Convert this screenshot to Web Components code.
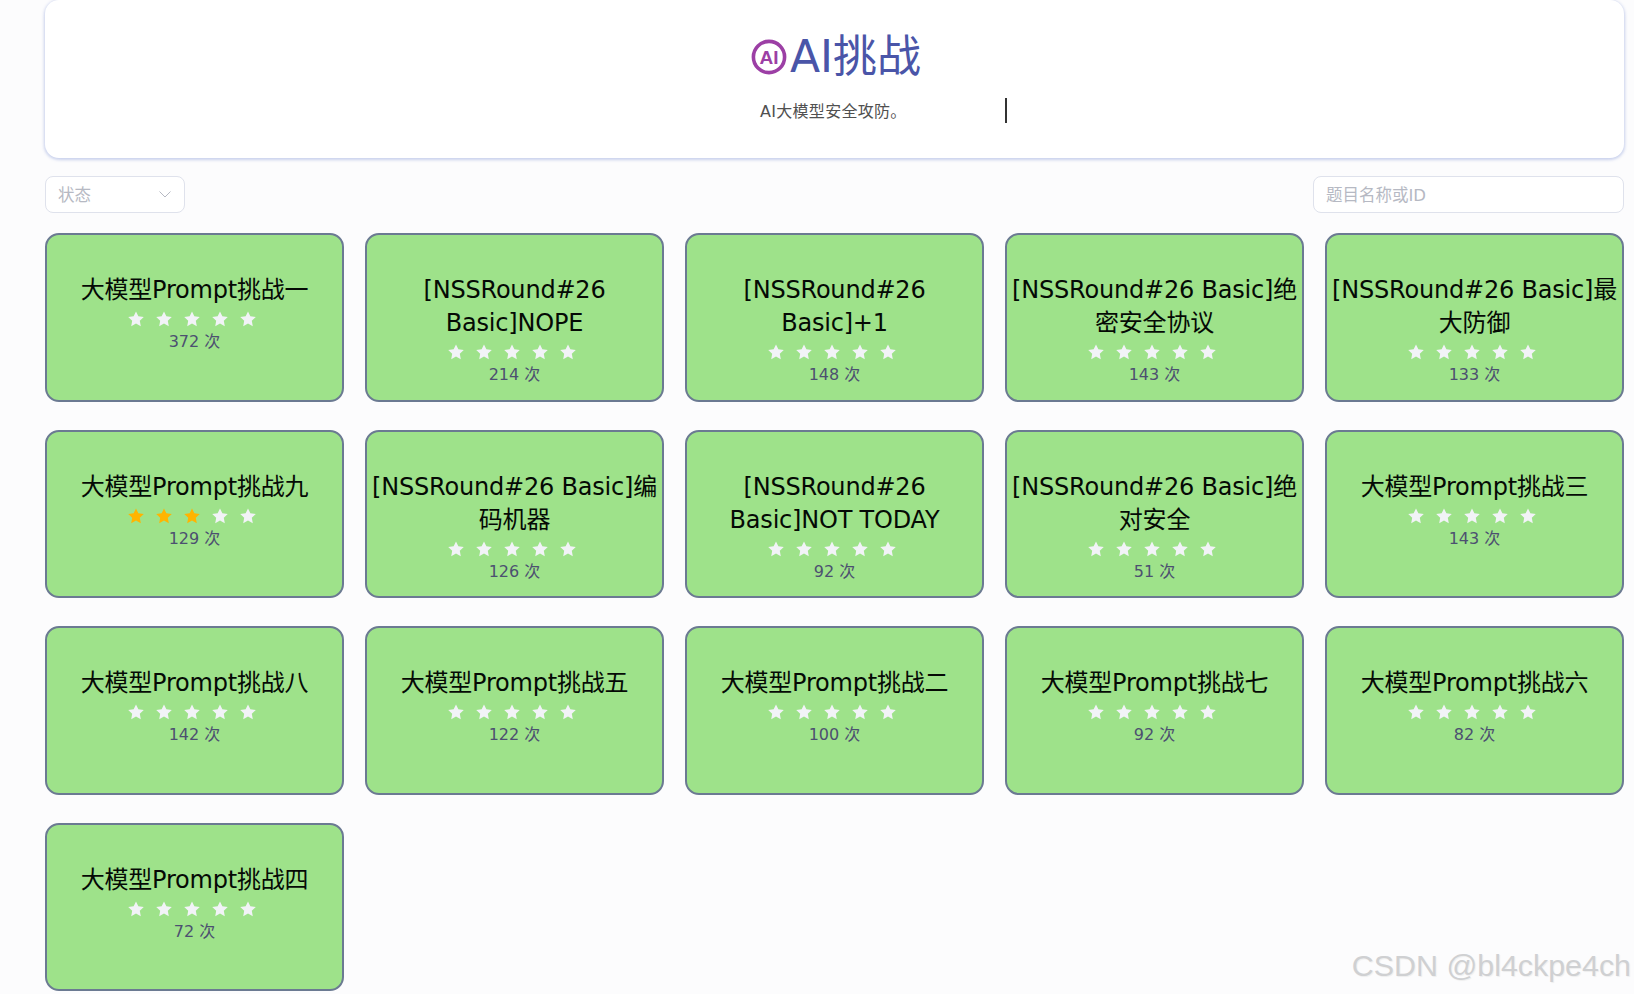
<!DOCTYPE html>
<html lang="zh">
<head>
<meta charset="utf-8">
<title>AI挑战</title>
<style>
  html, body { margin: 0; height: 100%; overflow: hidden; }
  body { background: #fcfcfd; font-family: "DejaVu Sans", "Noto Sans CJK SC", sans-serif; }
</style>
</head>
<body>
<challenge-page></challenge-page>
<script>
const FONT = `"DejaVu Sans", "Noto Sans CJK SC", sans-serif`;

class PageHeader extends HTMLElement {
    constructor() {
        super();
        this.root = this.attachShadow({ mode: 'open' });
    }

    connectedCallback() {
        this.root.innerHTML = `
      <style>
        :host {
            display: block;
            height: 158px;
            box-sizing: border-box;
            background: #fff;
            border-radius: 14px;
            box-shadow: 0 1px 3px 1px rgba(130, 150, 215, 0.42);
            padding-top: 28px;
        }
        .title {
            display: flex;
            justify-content: center;
            align-items: center;
            height: 56px;
            gap: 3px;
            padding-left: 3px;
            margin-top: 1px;
            font-size: 44px;
            line-height: 56px;
            color: #4a55a8;
        }
        .title svg { width: 36px; height: 36px; }
        .sub {
            display: flex;
            align-items: center;
            height: 26px;
            margin-top: 12px;
            margin-left: 715px;
            font-size: 16px;
            letter-spacing: 0.3px;
            color: #505050;
        }
        .typed { width: 245px; white-space: nowrap; }
        .caret { width: 1.5px; height: 25px; background: #333; }
      </style>
      <div class="title">
        <svg viewBox="0 0 36 36">
          <circle cx="18" cy="18" r="15.6" fill="none" stroke="#9c3fa5" stroke-width="3.6"/>
          <text x="18" y="24.5" text-anchor="middle" font-size="19" font-weight="700" fill="#9c3fa5" font-family="Liberation Sans, sans-serif">AI</text>
        </svg>
        <span>AI挑战</span>
      </div>
      <div class="sub"><span class="typed">AI大模型安全攻防。</span><span class="caret"></span></div>
    `;
    }
}

class FilterBar extends HTMLElement {
    constructor() {
        super();
        this.root = this.attachShadow({ mode: 'open' });
    }

    connectedCallback() {
        this.root.innerHTML = `
      <style>
        :host {
            display: flex;
            justify-content: space-between;
            margin-top: 18px;
            height: 37px;
        }
        .box {
            box-sizing: border-box;
            height: 37px;
            display: flex;
            align-items: center;
            justify-content: space-between;
            background: #fff;
            border: 1px solid #dfe2ec;
            border-radius: 8px;
            padding: 0 12px 2px;
            font-size: 16.5px;
            color: #b6b9c3;
        }
        .select { width: 140px; }
        .search { width: 311px; }
        svg { width: 14px; height: 14px; }
      </style>
      <div class="box select">
        <span>状态</span>
        <svg viewBox="0 0 14 14"><path d="M1.5 4.5 7 10l5.5-5.5" fill="none" stroke="#b6b9c3" stroke-width="1"/></svg>
      </div>
      <div class="box search"><span>题目名称或ID</span></div>
    `;
    }
}

class StarRow extends HTMLElement {
    constructor() {
        super();
        this.root = this.attachShadow({ mode: 'open' });
    }

    connectedCallback() {
        const lit = Number(this.getAttribute('lit') || 0);
        let stars = '';
        for (let i = 0; i < 5; i++) {
            const fill = i < lit ? '#ffb400' : '#f2f3f7';
            stars += `<svg viewBox="0 0 16 16"><path fill="${fill}" d="M8 .4l2.35 4.95 5.4.72-3.95 3.75 1 5.38L8 12.6l-4.8 2.6 1-5.38L.25 6.07l5.4-.72z"/></svg>`;
        }
        this.root.innerHTML = `
      <style>
        :host {
            display: flex;
            justify-content: center;
            gap: 12px;
            height: 26px;
            padding: 0 6px 0 0;
            margin-top: -1px;
            margin-bottom: 1px;
            align-items: center;
        }
        svg { width: 16px; height: 16px; display: block; }
      </style>
      ${stars}
    `;
    }
}

class ChallengeCard extends HTMLElement {
    constructor() {
        super();
        this.root = this.attachShadow({ mode: 'open' });
    }

    connectedCallback() {
        this.root.innerHTML = `
      <style>
        :host {
            display: block;
            box-sizing: border-box;
            height: 168.5px;
            background: #9ee28a;
            border: 2px solid #6b7a92;
            border-radius: 14px;
            padding: 39px 3px 0;
            text-align: center;
        }
        .title {
            font-size: 24px;
            line-height: 33px;
            letter-spacing: -0.2px;
            color: #050a05;
        }
        .count {
            font-size: 16px;
            line-height: 22px;
            color: #4c5070;
            margin-top: -2px;
        }
      </style>
      <div class="title"><slot></slot></div>
      <star-row lit="${this.getAttribute('lit') || 0}"></star-row>
      <div class="count">${this.getAttribute('count')} 次</div>
    `;
    }
}

class ChallengePage extends HTMLElement {
    constructor() {
        super();
        this.root = this.attachShadow({ mode: 'open' });
    }

    connectedCallback() {
        const items = [
            ['大模型Prompt挑战一', 372], ['[NSSRound#26 Basic]NOPE', 214], ['[NSSRound#26 Basic]+1', 148],
            ['[NSSRound#26 Basic]绝密安全协议', 143], ['[NSSRound#26 Basic]最大防御', 133],
            ['大模型Prompt挑战九', 129, 3], ['[NSSRound#26 Basic]编码机器', 126], ['[NSSRound#26 Basic]NOT TODAY', 92],
            ['[NSSRound#26 Basic]绝对安全', 51], ['大模型Prompt挑战三', 143],
            ['大模型Prompt挑战八', 142], ['大模型Prompt挑战五', 122], ['大模型Prompt挑战二', 100],
            ['大模型Prompt挑战七', 92], ['大模型Prompt挑战六', 82],
            ['大模型Prompt挑战四', 72],
        ];
        const cards = items.map(([name, count, lit]) =>
            `<challenge-card count="${count}" lit="${lit || 0}">${name}</challenge-card>`).join('');
        this.root.innerHTML = `
      <style>
        :host {
            display: block;
            position: relative;
            height: 994px;
            box-sizing: border-box;
            padding: 0 10px 0 45px;
            font-family: ${FONT};
        }
        .grid {
            display: grid;
            grid-template-columns: repeat(5, minmax(0, 1fr));
            column-gap: 21px;
            row-gap: 28px;
            margin-top: 20px;
        }
        .mark {
            position: absolute;
            right: 3px;
            bottom: 11px;
            font: 30.4px "Liberation Sans", sans-serif;
            color: #cfd0d2;
            text-shadow: 1px 1px 1px #eee;
        }
      </style>
      <page-header></page-header>
      <filter-bar></filter-bar>
      <div class="grid">${cards}</div>
      <div class="mark">CSDN @bl4ckpe4ch</div>
    `;
    }
}

customElements.define('page-header', PageHeader);
customElements.define('filter-bar', FilterBar);
customElements.define('star-row', StarRow);
customElements.define('challenge-card', ChallengeCard);
customElements.define('challenge-page', ChallengePage);
</script>
</body>
</html>
